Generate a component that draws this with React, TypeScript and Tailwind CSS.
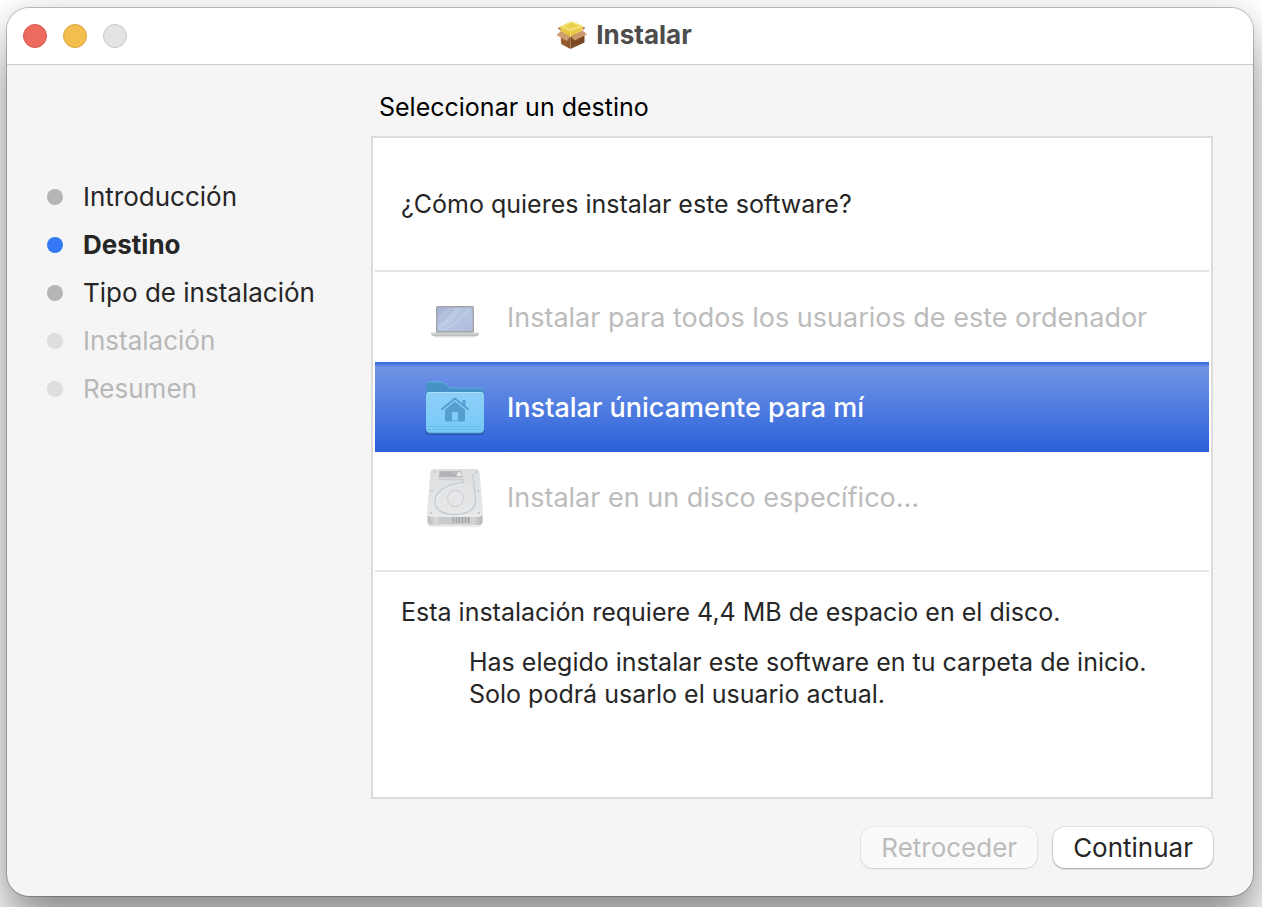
import { useState } from "react";
import clsx from "clsx";

function PackageIcon() {
  return (
    <svg width="32" height="30" viewBox="0 0 32 30" aria-hidden="true">
      <defs>
        <linearGradient id="box-left" x1="0" y1="0" x2="1" y2="1">
          <stop offset="0" stopColor="#a66a3a" />
          <stop offset="1" stopColor="#8a5129" />
        </linearGradient>
        <linearGradient id="box-right" x1="0" y1="0" x2="0" y2="1">
          <stop offset="0" stopColor="#6b3d1c" />
          <stop offset="1" stopColor="#87512b" />
        </linearGradient>
        <linearGradient id="box-flap" x1="0" y1="0" x2="1" y2="1">
          <stop offset="0" stopColor="#c08c60" />
          <stop offset="1" stopColor="#d9a77a" />
        </linearGradient>
        <linearGradient id="box-yellow" x1="0" y1="0" x2="0" y2="1">
          <stop offset="0" stopColor="#f3dc62" />
          <stop offset="1" stopColor="#e3bd35" />
        </linearGradient>
      </defs>
      <path d="M4.500 12 L14.500 17 V29 L6 24.500 Q5 24 5 23 Z" fill="url(#box-left)" />
      <path d="M14.500 17 L28.500 12 V21.500 Q28.500 22.500 27.500 23 L14.500 29 Z" fill="url(#box-right)" />
      <path d="M5 7 L1.500 8 L5 11 Z" fill="#a97547" />
      <path d="M26.500 6.500 L29.500 8 L26.500 10.500 Z" fill="#b8814f" />
      <path d="M5 11 L14.500 16 L11 21 L0.500 15 Z" fill="#cf9d72" />
      <path d="M14.500 16 L26.500 10.500 L31 14.500 L18.500 20.500 Z" fill="url(#box-flap)" />
      <path d="M4 6.500 L15.500 1.500 L27 6 L26 10.500 L14.500 16.500 L5 11.500 Z" fill="url(#box-yellow)" />
      <path d="M4 6.500 L15.500 1.500 L27 6 L14.500 10.500 Z" fill="#f5e072" />
      <path d="M8 6.500 L15.500 3 L23.500 6 L14.500 9 Z" fill="#ebd04d" />
      <path d="M14.500 10.500 V16.500" stroke="#f3dd70" strokeWidth="1" />
      <path d="M4.500 6.500 L14.500 10.500 L27 6" fill="none" stroke="#f8ea9a" strokeWidth="0.600" />
    </svg>
  );
}

function LaptopIcon() {
  return (
    <svg width="50" height="50" viewBox="0 -12 50 50" aria-hidden="true">
      <defs>
        <linearGradient id="laptop-screen" x1="0" y1="0" x2="1" y2="1">
          <stop offset="0" stopColor="#a7b3d2" />
          <stop offset="0.5" stopColor="#b6c6e2" />
          <stop offset="1" stopColor="#b3bbdc" />
        </linearGradient>
        <linearGradient id="laptop-base" x1="0" y1="0" x2="0" y2="1">
          <stop offset="0" stopColor="#d6d6d7" />
          <stop offset="0.6" stopColor="#c6c7c8" />
          <stop offset="1" stopColor="#adadae" />
        </linearGradient>
      </defs>
      <rect x="6" y="1" width="38" height="27" rx="1.500" fill="#a1a5aa" />
      <rect x="7.500" y="2.500" width="35" height="23.500" fill="url(#laptop-screen)" />
      <path d="M8 20 Q19 14 24 3 H31 Q24 16 8 25 Z" fill="#c9d6ea" opacity="0.45" />
      <path d="M13 25 Q28 20 39 4 M9 13 Q16 9 20 3" fill="none" stroke="#d5e0f0" strokeWidth="1" opacity="0.6" />
      <path d="M1 27.500 H49 V29 Q48 31.500 44 31.500 H6 Q2 31.500 1 29 Z" fill="url(#laptop-base)" />
      <path d="M6 32 H44" stroke="#e6e6e6" strokeWidth="1" />
    </svg>
  );
}

function HomeFolderIcon() {
  return (
    <svg width="62" height="56" viewBox="0 0 62 56" aria-hidden="true">
      <defs>
        <linearGradient id="folder-front" x1="0" y1="0" x2="0" y2="1">
          <stop offset="0" stopColor="#8dd0f7" />
          <stop offset="0.8" stopColor="#7bcbf8" />
          <stop offset="1" stopColor="#79c8f4" />
        </linearGradient>
      </defs>
      <path d="M1.500 49 H60.500 Q61 55 56 55 H6 Q1 55 1.500 49 Z" fill="#163a80" opacity="0.5" />
      <path d="M2 6 Q2 2 6 2 H17 Q19 2 21 4 L23 6 Q25 8 28 8 H56 Q60 8 60 12 V30 H2 Z" fill="#4692c6" />
      <path d="M3 3.500 Q4 2 7 2 H17 Q19 2 21 4 L23 6 Q25 8 28 8 H56 Q58 8 59 9.500" fill="none" stroke="#62b0dd" strokeWidth="1" />
      <path d="M2 16 Q2 12 6 12 H56 Q60 12 60 16 V49 Q60 53 56 53 H6 Q2 53 2 49 Z" fill="url(#folder-front)" />
      <path d="M3 13.500 Q4 12.500 6 12.500 H56 Q58 12.500 59 13.500" fill="none" stroke="#a9e0fb" strokeWidth="1" />
      <path d="M2 46.500 H60 M2 49.500 H60" stroke="#5bb3e4" strokeWidth="1" opacity="0.5" />
      <path d="M3 51.500 Q4 53 6 53 H56 Q58 53 59 51.500" fill="none" stroke="#519fc8" strokeWidth="1" />
      <path d="M17.500 29.500 L31 18.500 L44.500 29.500" fill="none" stroke="#559fd0" strokeWidth="2" />
      <path d="M38.500 20 H41.500 V26.500 L38.500 24 Z" fill="#559fd0" />
      <path d="M21 29.500 L31 21.500 L41 29.500 V40 Q41 41.500 39.500 41.500 H34 V32 H28 V41.500 H22.500 Q21 41.500 21 40 Z" fill="#559fd0" />
      <path d="M28 40 H34 V41.500 H28 Z" fill="#6ab4e0" />
    </svg>
  );
}

function DiskIcon() {
  return (
    <svg width="60" height="62" viewBox="0 0 60 62" aria-hidden="true">
      <defs>
        <linearGradient id="disk-top" x1="0" y1="0" x2="0" y2="1">
          <stop offset="0" stopColor="#dcdee0" />
          <stop offset="1" stopColor="#e6e8ea" />
        </linearGradient>
        <linearGradient id="disk-side" x1="0" y1="0" x2="1" y2="0">
          <stop offset="0" stopColor="#b9babc" />
          <stop offset="0.15" stopColor="#d8d9da" />
          <stop offset="0.85" stopColor="#d2d3d4" />
          <stop offset="1" stopColor="#b5b6b8" />
        </linearGradient>
      </defs>
      <path d="M3 56 H57 Q57 60 53 60 H7 Q3 60 3 56 Z" fill="#000" opacity="0.08" />
      <path d="M2.500 46 H57.500 V54 Q57.500 58 54 58 H6 Q2.500 58 2.500 54 Z" fill="url(#disk-side)" />
      <path d="M13 50 H46 V57 H13 Z" fill="#c9cacb" />
      <path d="M28.500 50 V56 M31.500 50 V56 M34.500 50 V56 M37.500 50 V56 M40.500 50 V56 M43.500 50 V56" stroke="#a2a3a5" strokeWidth="1.500" />
      <path d="M9 2 H51 Q54 2 54.500 5 L58 45 Q58 49.500 54 49.500 H6 Q2 49.500 2 45 L5.500 5 Q6 2 9 2 Z" fill="url(#disk-top)" />
      <path d="M3 47 Q3.500 49 6 49 H54 Q56.500 49 57 47" fill="none" stroke="#f0f1f2" strokeWidth="1" />
      <path d="M14 11.500 Q14.500 12.500 16 12.500 H37 Q39 12.500 39 14 Q39 15 37 15.500 C22 18 10 24 10 35 C10 43 18 47.500 29 47.500 C43 47.500 51 42 50.500 33 L48 7" fill="none" stroke="#cacdd0" strokeWidth="1.500" />
      <path d="M37 17 C23 19 11.500 25 11.500 35" fill="none" stroke="#eff0f1" strokeWidth="1" />
      <circle cx="30.500" cy="31.500" r="8" fill="#e4e6e8" stroke="#ccced1" strokeWidth="1" />
      <path d="M14.500 4 H36 L37.500 10.500 H13.500 Z" fill="#bcbdbf" />
      <path d="M15.500 6 H27 M15.500 8 H31" stroke="#a3a4a6" strokeWidth="1" />
      <path d="M33.500 5 H35 L36.500 9 H31.500 Z" fill="#f0f0f0" />
      <g fill="#bcbfc1">
        <circle cx="9" cy="5" r="1" />
        <circle cx="51" cy="5" r="1" />
        <circle cx="7" cy="24" r="1" />
        <circle cx="53" cy="24" r="1" />
        <circle cx="6" cy="46" r="1" />
        <circle cx="54" cy="46" r="1" />
      </g>
    </svg>
  );
}

type StepState = "done" | "current" | "pending";

const steps: { label: string; state: StepState }[] = [
  { label: "Introducción", state: "done" },
  { label: "Destino", state: "current" },
  { label: "Tipo de instalación", state: "done" },
  { label: "Instalación", state: "pending" },
  { label: "Resumen", state: "pending" },
];

const dotStyles: Record<StepState, string> = {
  done: "bg-[#b5b5b5]",
  current: "bg-[#3478f6]",
  pending: "bg-[#dedede]",
};

const stepStyles: Record<StepState, string> = {
  done: "text-[#262626]",
  current: "font-bold text-[#262626]",
  pending: "text-[#b8b8b8]",
};

const destinations = [
  { id: "all", label: "Instalar para todos los usuarios de este ordenador", Icon: LaptopIcon, enabled: false },
  { id: "me", label: "Instalar únicamente para mí", Icon: HomeFolderIcon, enabled: true },
  { id: "disk", label: "Instalar en un disco específico…", Icon: DiskIcon, enabled: false },
];

function TitleBar() {
  return (
    <header className="grid h-[57px] shrink-0 grid-cols-[1fr_auto_1fr] items-center border-b border-[#cccccc] bg-white px-4">
      <div className="flex gap-4">
        <button type="button" aria-label="Cerrar" className="size-6 rounded-full border border-[#d9564c] bg-[#ec6a5e]" />
        <button type="button" aria-label="Minimizar" className="size-6 rounded-full border border-[#dba33a] bg-[#f4be4f]" />
        <button type="button" aria-label="Ampliar" disabled className="size-6 rounded-full border border-[#c6c6c6] bg-[#e4e4e4]" />
      </div>
      <div className="flex items-center gap-2 pr-3 pb-0.5">
        <PackageIcon />
        <h1 className="text-[26px] leading-8 font-bold text-[#4d4d4d]">Instalar</h1>
      </div>
    </header>
  );
}

export default function App() {
  const [selected, setSelected] = useState("me");

  return (
    <div className="flex min-h-screen overflow-hidden bg-white pt-2 pr-[9px] pb-[11px] pl-[7px] font-[Inter,'Liberation_Sans',sans-serif] text-[25px] leading-8 text-[#262626]">
      <div className="flex flex-1 flex-col overflow-hidden rounded-[22px] bg-[#f5f5f5] shadow-[0_0_0_1px_rgba(0,0,0,0.22),0_0_24px_rgba(0,0,0,0.12),0_36px_50px_rgba(0,0,0,0.4)]">
        <TitleBar />
        <div className="flex flex-1">
          <nav aria-label="Pasos" className="w-[364px] shrink-0 pt-[108px] pl-10 text-[26px]">
            <ol>
              {steps.map(({ label, state }) => (
                <li
                  key={label}
                  aria-current={state === "current" ? "step" : undefined}
                  className={clsx("flex h-12 items-center gap-5", stepStyles[state])}
                >
                  <span className={clsx("size-4 rounded-full", dotStyles[state])} />
                  {label}
                </li>
              ))}
            </ol>
          </nav>
          <main className="flex min-w-0 flex-1 flex-col pt-[26px] pr-10 pb-7">
            <h2 className="pl-2 text-black">Seleccionar un destino</h2>
            <section className="mt-[13px] flex flex-1 flex-col border-2 border-[#dcdcdc] bg-white px-0.5">
              <p id="question" className="px-[26px] py-[50px]">
                ¿Cómo quieres instalar este software?
              </p>
              <div role="radiogroup" aria-labelledby="question" className="border-y-2 border-[#e4e4e4] pb-7 text-[27px]">
                {destinations.map(({ id, label, Icon, enabled }) => (
                  <button
                    key={id}
                    type="button"
                    role="radio"
                    aria-checked={selected === id}
                    disabled={!enabled}
                    onClick={() => setSelected(id)}
                    className={clsx(
                      "flex h-[90px] w-full items-center gap-5 pt-0.5 pl-12 text-left",
                      selected === id
                        ? "bg-linear-to-b from-[#2f65dc] via-[#7094e6] via-6% to-[#2a60d9] font-medium text-white"
                        : "text-[#bcbcbc]",
                    )}
                  >
                    <span className="flex w-16 justify-center">
                      <Icon />
                    </span>
                    {label}
                  </button>
                ))}
              </div>
              <div className="px-[26px] pt-6">
                <p>Esta instalación requiere 4,4 MB de espacio en el disco.</p>
                <p className="mt-[18px] pl-[68px]">
                  Has elegido instalar este software en tu carpeta de inicio.
                  <br />
                  Solo podrá usarlo el usuario actual.
                </p>
              </div>
            </section>
            <footer className="mt-7 flex justify-end gap-4 text-[26px]">
              <button
                type="button"
                disabled
                className="h-[41px] rounded-xl bg-[#fafafa] px-5 text-[#bcbcbc] shadow-[0_0_0_1px_rgba(0,0,0,0.05),0_1px_2px_rgba(0,0,0,0.1)]"
              >
                Retroceder
              </button>
              <button
                type="button"
                className="h-[41px] rounded-xl bg-white px-5 shadow-[0_0_0_1px_rgba(0,0,0,0.07),0_1px_2px_rgba(0,0,0,0.3)]"
              >
                Continuar
              </button>
            </footer>
          </main>
        </div>
      </div>
    </div>
  );
}
